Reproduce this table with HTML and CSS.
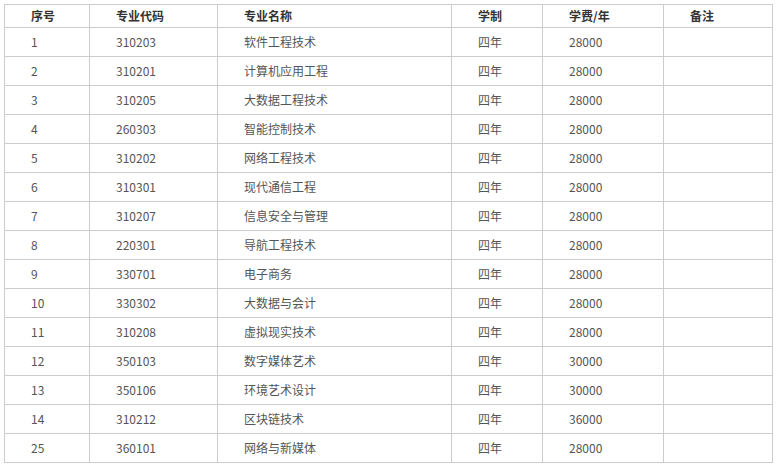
FILE: index.html
```html
<!DOCTYPE html>
<html lang="zh">
<head>
<meta charset="utf-8">
<title>专业列表</title>
<link rel="stylesheet" href="styles.css">
</head>
<body>
<table class="majors">
  <colgroup>
    <col class="c1"><col class="c2"><col class="c3"><col class="c4"><col class="c5"><col class="c6">
  </colgroup>
  <thead>
    <tr><th>序号</th><th>专业代码</th><th>专业名称</th><th>学制</th><th>学费/年</th><th>备注</th></tr>
  </thead>
  <tbody>
    <tr><td>1</td><td>310203</td><td>软件工程技术</td><td>四年</td><td>28000</td><td></td></tr>
    <tr><td>2</td><td>310201</td><td>计算机应用工程</td><td>四年</td><td>28000</td><td></td></tr>
    <tr><td>3</td><td>310205</td><td>大数据工程技术</td><td>四年</td><td>28000</td><td></td></tr>
    <tr><td>4</td><td>260303</td><td>智能控制技术</td><td>四年</td><td>28000</td><td></td></tr>
    <tr><td>5</td><td>310202</td><td>网络工程技术</td><td>四年</td><td>28000</td><td></td></tr>
    <tr><td>6</td><td>310301</td><td>现代通信工程</td><td>四年</td><td>28000</td><td></td></tr>
    <tr><td>7</td><td>310207</td><td>信息安全与管理</td><td>四年</td><td>28000</td><td></td></tr>
    <tr><td>8</td><td>220301</td><td>导航工程技术</td><td>四年</td><td>28000</td><td></td></tr>
    <tr><td>9</td><td>330701</td><td>电子商务</td><td>四年</td><td>28000</td><td></td></tr>
    <tr><td>10</td><td>330302</td><td>大数据与会计</td><td>四年</td><td>28000</td><td></td></tr>
    <tr><td>11</td><td>310208</td><td>虚拟现实技术</td><td>四年</td><td>28000</td><td></td></tr>
    <tr><td>12</td><td>350103</td><td>数字媒体艺术</td><td>四年</td><td>30000</td><td></td></tr>
    <tr><td>13</td><td>350106</td><td>环境艺术设计</td><td>四年</td><td>30000</td><td></td></tr>
    <tr><td>14</td><td>310212</td><td>区块链技术</td><td>四年</td><td>36000</td><td></td></tr>
    <tr><td>25</td><td>360101</td><td>网络与新媒体</td><td>四年</td><td>28000</td><td></td></tr>
  </tbody>
</table>
</body>
</html>
```
FILE: styles.css
```css
html, body {
  margin: 0;
  padding: 0;
  background: #fff;
}
body {
  padding: 4px 0 0 4px;
  font-family: "Noto Sans CJK SC", "Noto Sans", sans-serif;
  font-size: 12px;
  color: #555;
}
.majors {
  border-collapse: collapse;
  table-layout: fixed;
  width: 768px;
}
.c1 { width: 85px; }
.c2 { width: 128px; }
.c3 { width: 234px; }
.c4 { width: 91px; }
.c5 { width: 121px; }
.c6 { width: 109px; }
.majors th,
.majors td {
  border: 1px solid #cccccc;
  padding: 0 0 0 26px;
  text-align: left;
  white-space: nowrap;
  line-height: 16px;
}
.majors th {
  height: 22px;
  font-weight: bold;
  color: #333;
}
.majors td {
  height: 28px;
}
```
